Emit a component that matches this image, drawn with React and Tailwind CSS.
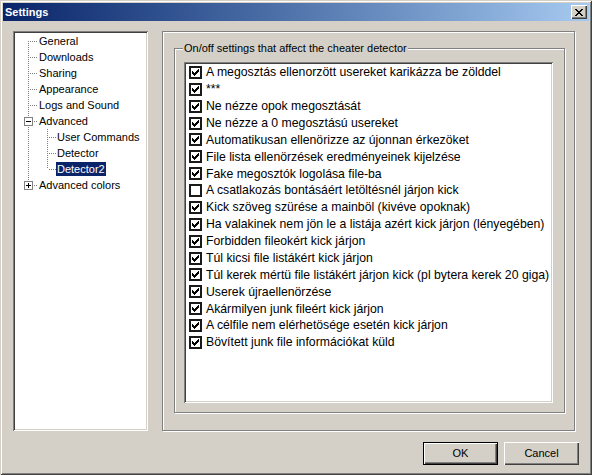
import React from "react";

const treeItems = [
  { label: "General", level: 0, pos: "first" },
  { label: "Downloads", level: 0 },
  { label: "Sharing", level: 0 },
  { label: "Appearance", level: 0 },
  { label: "Logs and Sound", level: 0 },
  { label: "Advanced", level: 0, box: "-" },
  { label: "User Commands", level: 1 },
  { label: "Detector", level: 1 },
  { label: "Detector2", level: 1, pos: "last", selected: true },
  { label: "Advanced colors", level: 0, box: "+", pos: "last" },
];

const options = [
  { label: "A megosztás ellenorzött usereket karikázza be zölddel", on: true },
  { label: "***", on: true },
  { label: "Ne nézze opok megosztását", on: true },
  { label: "Ne nézze a 0 megosztású usereket", on: true },
  { label: "Automatikusan ellenörizze az újonnan érkezöket", on: true },
  { label: "File lista ellenörzések eredményeinek kijelzése", on: true },
  { label: "Fake megosztók logolása file-ba", on: true },
  { label: "A csatlakozás bontásáért letöltésnél járjon kick", on: false },
  { label: "Kick szöveg szürése a mainböl (kivéve opoknak)", on: true },
  { label: "Ha valakinek nem jön le a listája azért kick járjon (lényegében)", on: true },
  { label: "Forbidden fileokért kick járjon", on: true },
  { label: "Túl kicsi file listákért kick járjon", on: true },
  { label: "Túl kerek mértü file listákért járjon kick (pl bytera kerek 20 giga)", on: true },
  { label: "Userek újraellenörzése", on: true },
  { label: "Akármilyen junk fileért kick járjon", on: true },
  { label: "A célfile nem elérhetösége esetén kick járjon", on: true },
  { label: "Bövített junk file információkat küld", on: true },
];

// dotted connector drawing for one tree row
const TreeLines = ({ item }) => {
  const width = item.level === 0 ? 24 : 41;
  const dot = { stroke: "#808080", strokeDasharray: "1 1", shapeRendering: "crispEdges" };
  // root-level vertical line (runs through children of Advanced too)
  let rootTop = 0;
  let rootBottom = 16;
  if (item.level === 0 && item.pos === "first") rootTop = 8;
  if (item.level === 0 && item.pos === "last") rootBottom = 8;
  return (
    <svg width={width} height="16" className="shrink-0">
      <line x1="13.5" y1={rootTop} x2="13.5" y2={rootBottom} style={dot} />
      {item.level === 0 && <line x1="15" y1="8.5" x2="23" y2="8.5" style={dot} />}
      {item.level === 1 && (
        <>
          <line x1="32.5" y1="0" x2="32.5" y2={item.pos === "last" ? 8 : 16} style={dot} />
          <line x1="34" y1="8.5" x2="41" y2="8.5" style={dot} />
        </>
      )}
      {item.box && (
        <>
          <rect x="9.5" y="4.5" width="8" height="8" fill="#fff" stroke="#808080" shapeRendering="crispEdges" />
          <line x1="11" y1="8.5" x2="16" y2="8.5" stroke="#000" shapeRendering="crispEdges" />
          {item.box === "+" && <line x1="13.5" y1="6" x2="13.5" y2="11" stroke="#000" shapeRendering="crispEdges" />}
        </>
      )}
    </svg>
  );
};

const CheckBox = ({ on }) => (
  <div className="w-[13px] h-[13px] shrink-0 bg-white border-2 border-[#1a1a1a]">
    {on && (
      <svg width="9" height="9" viewBox="0 0 9 9">
        <path d="M1.5 3.5 L3.5 5.5 L7.5 1.5 M1.5 4.5 L3.5 6.5 L7.5 2.5 M1.5 5.5 L3.5 7.5 L7.5 3.5" stroke="#000" fill="none" shapeRendering="crispEdges" />
      </svg>
    )}
  </div>
);

const raised =
  "shadow-[inset_1px_1px_0_#fff,inset_-1px_-1px_0_#404040,inset_-2px_-2px_0_#808080]";
const sunken =
  "shadow-[inset_1px_1px_0_#808080,inset_-1px_-1px_0_#fff,inset_2px_2px_0_#404040,inset_-2px_-2px_0_#d4d0c8]";

export default function App() {
  return (
    <div
      className="w-[592px] h-[475px] bg-[#d4d0c8] p-[3px] flex flex-col text-black shadow-[inset_1px_1px_0_#d4d0c8,inset_-1px_-1px_0_#404040,inset_2px_2px_0_#fff,inset_-2px_-2px_0_#808080]"
      style={{ fontFamily: '"Liberation Sans", Arial, sans-serif' }}
    >
      {/* title bar */}
      <div className="h-[18px] flex items-center justify-between bg-linear-to-r from-[#0a246a] to-[#a6caf0] pl-[2px] pr-[2px]">
        <span className="text-white font-bold text-[11px] leading-none">Settings</span>
        <div className={`w-[16px] h-[14px] bg-[#d4d0c8] flex items-center justify-center ${raised}`}>
          <svg width="8" height="7" viewBox="0 0 8 7">
            <path d="M0 0h2v1h-2zM6 0h2v1h-2zM1 1h2v1h-2zM5 1h2v1h-2zM2 2h4v1h-4zM3 3h2v1h-2zM2 4h4v1h-4zM1 5h2v1h-2zM5 5h2v1h-2zM0 6h2v1h-2zM6 6h2v1h-2z" fill="#000" />
          </svg>
        </div>
      </div>

      <div className="flex pl-[10px] pt-[10px]">
        {/* tree */}
        <div className={`w-[135px] h-[400px] bg-white p-[2px] ${sunken}`}>
          <div className="text-[11px] leading-none">
            {treeItems.map((item) => (
              <div key={item.label} className="h-[16px] flex items-center">
                <TreeLines item={item} />
                <span
                  className={`px-[1px] h-[14px] flex items-center whitespace-nowrap ${
                    item.selected ? "bg-[#0a246a] text-white" : ""
                  } ${item.level === 0 ? "-ml-[1px]" : ""}`}
                >
                  {item.label}
                </span>
              </div>
            ))}
          </div>
        </div>

        {/* right etched frame */}
        <div className="ml-[14px] w-[413px] h-[400px] border border-[#808080] shadow-[1px_1px_0_#fff,inset_1px_1px_0_#fff] pl-[11px] pr-[9px] pt-[16px] pb-[17px]">
          <div className="relative h-full border border-[#808080] shadow-[1px_1px_0_#fff,inset_1px_1px_0_#fff] pl-[9px] pr-[11px] pt-[13px] pb-[9px]">
            <span className="absolute left-[8px] -top-[7px] bg-[#d4d0c8] px-[1px] text-[11px] leading-[13px] whitespace-nowrap">
              On/off settings that affect the cheater detector
            </span>
            <div className={`h-full bg-white p-[2px] ${sunken}`}>
              <div className="pl-[3px]">
                {options.map((o) => (
                  <div key={o.label} className="h-[16.875px] flex items-center gap-[4px] text-[12.25px] whitespace-nowrap">
                    <CheckBox on={o.on} />
                    <span>{o.label}</span>
                  </div>
                ))}
              </div>
            </div>
          </div>
        </div>
      </div>

      {/* buttons */}
      <div className="flex justify-end gap-[6px] pr-[10px] mt-[11px] text-[11px]">
        <div className="w-[75px] h-[23px] border border-black">
          <div className={`w-full h-full flex items-center justify-center ${raised}`}>OK</div>
        </div>
        <div className={`w-[75px] h-[23px] flex items-center justify-center ${raised}`}>Cancel</div>
      </div>
    </div>
  );
}
